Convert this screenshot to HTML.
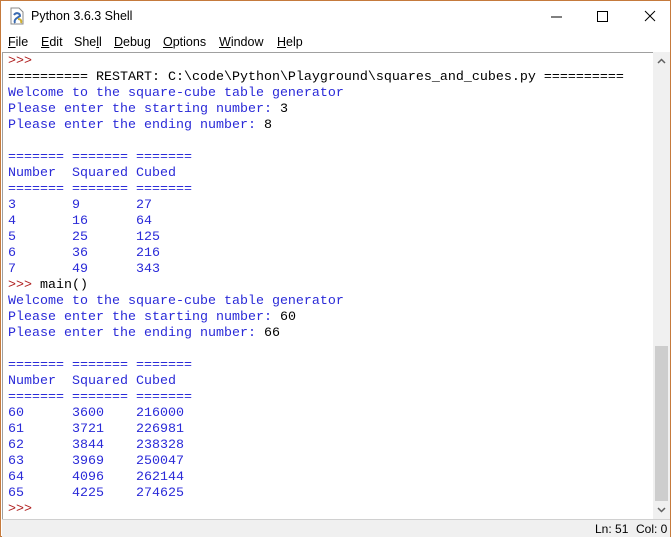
<!DOCTYPE html>
<html><head><meta charset="utf-8"><style>
*{margin:0;padding:0;box-sizing:border-box}
body{width:671px;height:537px;overflow:hidden;background:#fff;font-family:"Liberation Sans",sans-serif}
.win{position:absolute;left:0;top:0;width:671px;height:537px;border:1px solid #c57a3c;background:#fff}
.title{position:absolute;left:30px;top:8px;font-size:12.5px;color:#000}
.menu span{position:absolute;top:34px;font-size:12.5px;color:#000}
.menu u{text-decoration:underline}
.text{position:absolute;left:1px;top:51px;width:651px;height:467px;border-top:1px solid #a0a0a0;border-left:1px solid #a0a0a0}
pre{position:absolute;left:5px;top:1px;font-family:"Liberation Mono",monospace;font-size:13.33px;line-height:16px;color:#2a2ad8}
.p{color:#b02020}.k{color:#000}
.sb{position:absolute;left:652px;top:51px;width:17px;height:467px;background:#f0f0f0}
.thumb{position:absolute;left:2px;top:294px;width:13px;height:155px;background:#cdcdcd}
.status{position:absolute;left:1px;top:518px;width:668px;height:18px;background:#f0f0f0;border-top:1px solid #d0d0d0;font-size:12px}
</style></head><body><div class="win">
<svg style="position:absolute;left:8px;top:6px" width="16" height="18"><path d="M2 1h8l4 4v12H2z" fill="#fff" stroke="#888"/><path d="M5 8c2-3 6-2 6 1l-3 2c-2 1-3 3-2 5" stroke="#3a6ab0" stroke-width="2" fill="none"/><path d="M9 12c2 0 4 1 3 4" stroke="#d0b030" stroke-width="2" fill="none"/></svg>
<div class="title">Python 3.6.3 Shell</div>
<svg style="position:absolute;left:550px;top:8px" width="115" height="16"><path d="M0 8h11" stroke="#000"/><rect x="46.5" y="2.5" width="10" height="10" fill="none" stroke="#000"/><path d="M94 2l10 10M104 2l-10 10" stroke="#000"/></svg>
<div class="menu"><span style="left:7px"><u>F</u>ile</span><span style="left:40px"><u>E</u>dit</span><span style="left:73px">She<u>l</u>l</span><span style="left:113px"><u>D</u>ebug</span><span style="left:162px"><u>O</u>ptions</span><span style="left:218px"><u>W</u>indow</span><span style="left:276px"><u>H</u>elp</span></div>
<div class="text"><pre><span class="p">&gt;&gt;&gt;</span>
<span class="k">========== RESTART: C:\code\Python\Playground\squares_and_cubes.py ==========</span>
Welcome to the square-cube table generator
Please enter the starting number: <span class="k">3</span>
Please enter the ending number: <span class="k">8</span>

======= ======= =======
Number  Squared Cubed
======= ======= =======
3       9       27
4       16      64
5       25      125
6       36      216
7       49      343
<span class="p">&gt;&gt;&gt;</span> <span class="k">main()</span>
Welcome to the square-cube table generator
Please enter the starting number: <span class="k">60</span>
Please enter the ending number: <span class="k">66</span>

======= ======= =======
Number  Squared Cubed
======= ======= =======
60      3600    216000
61      3721    226981
62      3844    238328
63      3969    250047
64      4096    262144
65      4225    274625
<span class="p">&gt;&gt;&gt;</span></pre></div>
<div class="sb"><svg style="position:absolute;left:4px;top:6px" width="9" height="6"><path d="M1 5l3.5-3.5L8 5" stroke="#606060" fill="none" stroke-width="1.5"/></svg><div class="thumb"></div><svg style="position:absolute;left:4px;top:455px" width="9" height="6"><path d="M1 1l3.5 3.5L8 1" stroke="#606060" fill="none" stroke-width="1.5"/></svg></div>
<div class="status"><span style="position:absolute;left:593px;top:2px">Ln: 51</span><span style="position:absolute;left:634px;top:2px">Col: 0</span></div>
</div></body></html>
